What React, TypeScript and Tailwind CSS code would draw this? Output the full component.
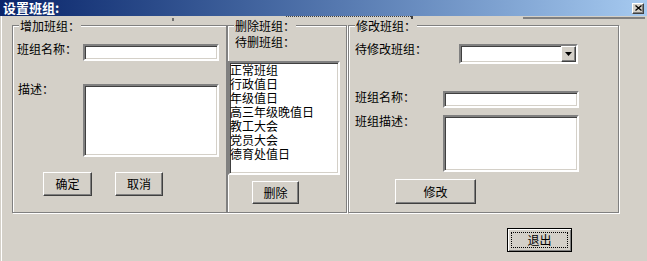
import React from "react";

const raised =
  "border border-t-white border-l-white border-r-[#404040] border-b-[#404040] shadow-[inset_-1px_-1px_0_#808080] bg-[#d4d0c8]";
const sunken =
  "border-2 border-t-[#808080] border-l-[#808080] border-r-white border-b-white shadow-[inset_1px_1px_0_#404040,inset_-1px_-1px_0_#d4d0c8] bg-white";

const Btn = ({ children, className }: { children: React.ReactNode; className: string }) => (
  <button type="button" className={`flex items-center justify-center leading-[12px] text-black ${raised} ${className}`}>
    {children}
  </button>
);

const Group = ({
  title,
  className,
  children,
}: {
  title: string;
  className: string;
  children: React.ReactNode;
}) => (
  <div
    className={`relative h-[188px] border border-[#808080] shadow-[inset_1px_1px_0_#fff,1px_1px_0_#fff] ${className}`}
  >
    <span className="absolute left-[6px] -top-[6px] bg-[#d4d0c8] px-px leading-[12px]">{title}</span>
    {children}
  </div>
);

const groups = ["正常班组", "行政值日", "年级值日", "高三年级晚值日", "教工大会", "党员大会", "德育处值日"];

export default function App() {
  return (
    <div className="relative w-[647px] h-[261px] overflow-hidden bg-[#d4d0c8] text-[12px] text-black font-['Noto_Sans_CJK_SC',sans-serif] shadow-[inset_1px_0_0_#d4d0c8,inset_2px_0_0_#fff]">
      {/* title bar */}
      <div className="flex h-[16px] items-center justify-between bg-gradient-to-r from-[#0a246a] to-[#a6caf0] pl-[3px] pr-[3px]">
        <span className="text-[13px] font-bold leading-[16px] text-white">设置班组:</span>
        <div className={`flex h-[11px] w-[12px] items-center justify-center ${raised}`}>
          <svg width="7" height="6" viewBox="0 0 7 6">
            <path d="M0.5 0.5 L6.5 5.5 M6.5 0.5 L0.5 5.5" stroke="#000" strokeWidth="1.3" />
          </svg>
        </div>
      </div>

      {/* redraw leftovers under the title bar */}
      <div className="absolute left-[286px] top-[16px] w-[125px] border-t border-dotted border-[#404040]" />
      <div className="absolute left-[411px] top-[16px] h-[3px] w-[2px] bg-[#404040]" />
      <div className="absolute left-[523px] top-[17px] h-[2px] w-[122px] bg-[#808080]" />
      <div className="absolute left-[172px] top-[18px] h-[3px] w-[2px] bg-[#707070]" />

      <div className="flex pl-[12px] pt-[9px]">
        {/* 增加班组 */}
        <Group title="增加班组：" className="w-[215px]">
          <div className="flex flex-col pl-[4px] pt-[18px]">
            <div className="flex items-start">
              <span className="-mt-px w-[66px] leading-[12px]">班组名称：</span>
              <input className={`h-[17px] w-[136px] ${sunken}`} />
            </div>
            <div className="mt-[23px] flex items-start">
              <span className="-mt-px w-[66px] pl-px leading-[12px]">描述：</span>
              <textarea className={`h-[73px] w-[136px] resize-none ${sunken}`} />
            </div>
            <div className="mt-[15px] flex gap-[23px] pl-[26px]">
              <Btn className="h-[24px] w-[49px]">确定</Btn>
              <Btn className="h-[24px] w-[48px]">取消</Btn>
            </div>
          </div>
        </Group>

        {/* 删除班组 */}
        <Group title="删除班组：" className="w-[120px]">
          <div className="flex flex-col pt-[10px]">
            <span className="ml-[7px] leading-[12px]">待删班组：</span>
            <div className={`mt-[13px] h-[114px] w-[112px] ${sunken}`}>
              <div className="flex flex-col leading-[14px]">
                {groups.map((g) => (
                  <span key={g}>{g}</span>
                ))}
              </div>
            </div>
            <Btn className="ml-[24px] mt-[6px] h-[23px] w-[47px]">删除</Btn>
          </div>
        </Group>

        {/* 修改班组 */}
        <Group title="修改班组：" className="ml-px w-[271px]">
          <div className="flex flex-col pl-[6px] pt-[18px]">
            <div className="flex items-start">
              <span className="-mt-px w-[104px] leading-[12px]">待修改班组：</span>
              <div className={`flex h-[20px] w-[119px] justify-end ${sunken}`}>
                <div className={`flex h-[16px] w-[15px] items-center justify-center ${raised}`}>
                  <svg width="7" height="4" viewBox="0 0 7 4">
                    <path d="M0 0 H7 L3.5 4 Z" fill="#000" />
                  </svg>
                </div>
              </div>
            </div>
            <div className="mt-[27px] flex items-start">
              <span className="w-[88px] leading-[12px]">班组名称：</span>
              <input className={`h-[17px] w-[136px] ${sunken}`} />
            </div>
            <div className="mt-[7px] flex items-start">
              <span className="w-[88px] leading-[12px]">班组描述：</span>
              <textarea className={`h-[57px] w-[136px] resize-none ${sunken}`} />
            </div>
            <Btn className="ml-[40px] mt-[7px] h-[25px] w-[81px]">修改</Btn>
          </div>
        </Group>
      </div>

      {/* 退出 */}
      <div className="mt-[15px] flex justify-end pr-[75px]">
        <button
          type="button"
          className="flex h-[24px] w-[65px] border border-black bg-[#d4d0c8] p-[3px] shadow-[inset_1px_1px_0_#fff,inset_-1px_-1px_0_#808080]"
        >
          <span className="flex flex-1 items-center justify-center border border-dotted border-black leading-[12px]">
            退出
          </span>
        </button>
      </div>
    </div>
  );
}
